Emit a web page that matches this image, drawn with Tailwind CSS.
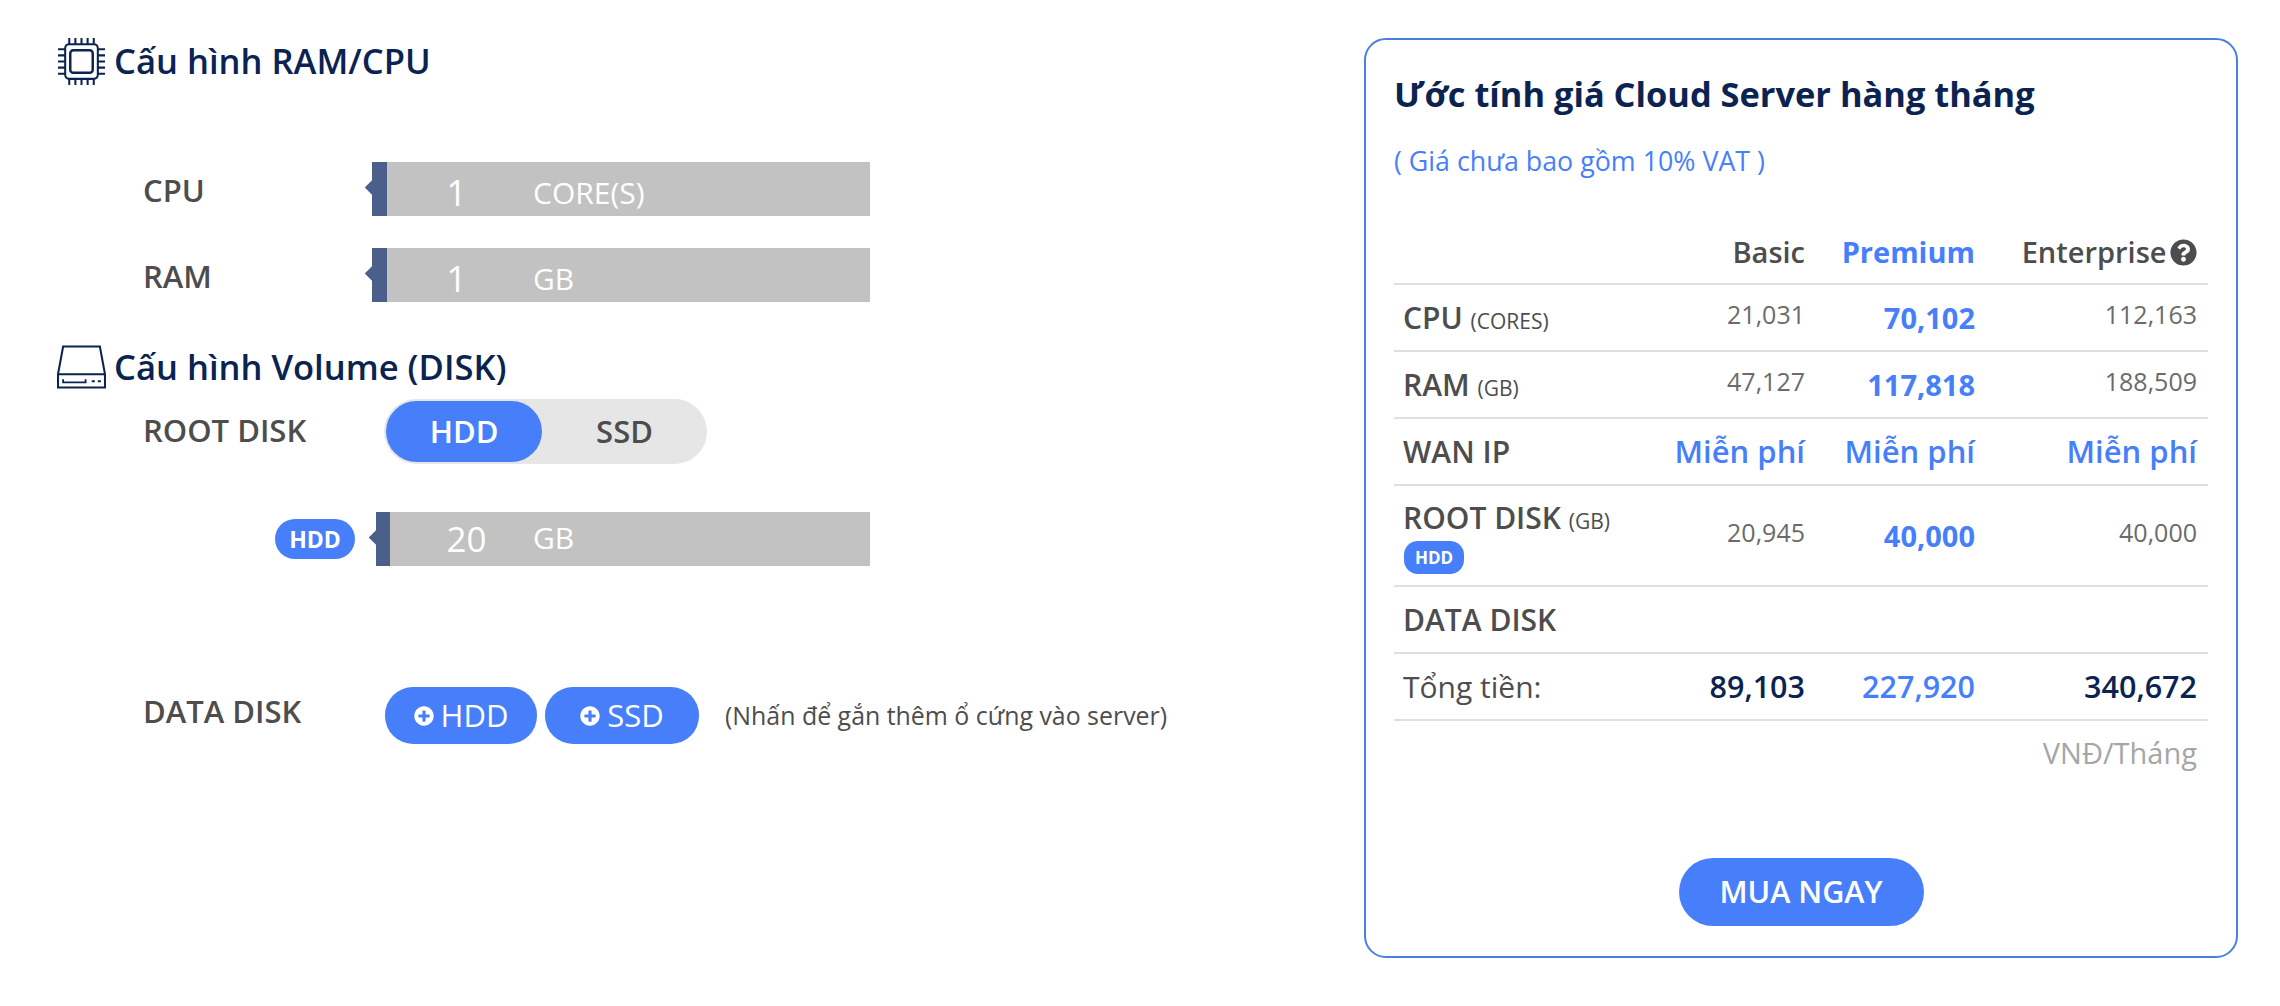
<!DOCTYPE html>
<html lang="vi">
<head>
  <meta charset="UTF-8">
  <title>Cloud Server</title>
  <script src="https://cdn.jsdelivr.net/npm/@tailwindcss/browser@4"></script>
</head>
<body class="bg-white font-['Open_Sans',sans-serif] text-[#4d4d4d]">
  <div class="flex items-start w-[2280px] h-[1006px] overflow-hidden">
    <!-- cau hinh -->
    <div class="w-[1364px] shrink-0 pl-[57px]">
      <div class="flex items-center h-[48px] mt-[37px] gap-[8px]">
        <svg class="w-[49px] h-[49px] shrink-0" viewBox="0 0 48 48" fill="none" stroke="#0a2351" stroke-width="2">
          <rect x="8" y="7" width="32" height="34" rx="4"/>
          <rect x="13" y="13" width="22" height="22" rx="3" stroke-width="2.4"/>
          <path d="M12 1v6M18 1v6M24 1v6M30 1v6M36 1v6M12 41v6M18 41v6M24 41v6M30 41v6M36 41v6M1 12h7M1 18h7M1 24h7M1 30h7M1 36h7M40 12h7M40 18h7M40 24h7M40 30h7M40 36h7"/>
        </svg>
        <h2 class="text-[34.6px] font-semibold text-[#0a2351] leading-none">Cấu hình RAM/CPU</h2>
      </div>

      <div class="flex items-center mt-[77px] h-[54px] pl-[86px]">
        <div class="w-[229px] text-[31px] font-semibold pt-[3px]">CPU</div>
        <div class="relative flex items-center w-[498px] h-[54px] bg-[#c2c2c2] text-white">
          <div class="relative self-stretch w-[15px] bg-[#4a5f8a]">
            <div class="absolute left-[-5px] top-[20px] w-[11px] h-[11px] rotate-45 bg-[#4a5f8a]"></div>
          </div>
          <span class="w-[146px] pr-[7px] text-center text-[36px] leading-none pt-[7px]">1</span>
          <span class="text-[30px] leading-none pt-[7px]">CORE(S)</span>
        </div>
      </div>

      <div class="flex items-center mt-[32px] h-[54px] pl-[86px]">
        <div class="w-[229px] text-[31px] font-semibold pt-[3px]">RAM</div>
        <div class="relative flex items-center w-[498px] h-[54px] bg-[#c2c2c2] text-white">
          <div class="relative self-stretch w-[15px] bg-[#4a5f8a]">
            <div class="absolute left-[-5px] top-[20px] w-[11px] h-[11px] rotate-45 bg-[#4a5f8a]"></div>
          </div>
          <span class="w-[146px] pr-[7px] text-center text-[36px] leading-none pt-[7px]">1</span>
          <span class="text-[30px] leading-none pt-[7px]">GB</span>
        </div>
      </div>

      <div class="flex items-center h-[48px] mt-[41px] gap-[8px]">
        <svg class="w-[49px] h-[44px] shrink-0" viewBox="0 0 48 42" fill="none" stroke="#0a2351" stroke-width="2">
          <path d="M6 1h36l5 27v13H1V28z"/>
          <path d="M1 28h46"/>
          <path d="M6 33v3h22v-3M34 35h3M40 35h3" stroke-width="1.8"/>
        </svg>
        <h2 class="text-[34.6px] font-semibold text-[#0a2351] leading-none">Cấu hình Volume (DISK)</h2>
      </div>

      <div class="flex items-start mt-[8px] pl-[86px]">
        <div class="w-[241px] text-[31px] font-semibold leading-[40px] pt-[11px]">ROOT DISK</div>
        <div class="flex items-center w-[323px] h-[65px] rounded-full bg-[#e6e6e6] p-[2px]">
          <div class="flex items-center justify-center w-[156px] h-[61px] rounded-full bg-[#477ffa] text-white text-[31px] font-semibold">HDD</div>
          <div class="flex-1 text-center text-[31px] font-semibold pl-[2px]">SSD</div>
        </div>
      </div>

      <div class="flex items-center mt-[48px] h-[54px] pl-[218px]">
        <div class="flex items-center justify-center w-[80px] h-[40px] rounded-full bg-[#477ffa] text-white text-[23px] font-bold mr-[21px]">HDD</div>
        <div class="relative flex items-center w-[494px] h-[54px] bg-[#c2c2c2] text-white">
          <div class="relative self-stretch w-[14px] bg-[#4a5f8a]">
            <div class="absolute left-[-5px] top-[20px] w-[11px] h-[11px] rotate-45 bg-[#4a5f8a]"></div>
          </div>
          <span class="w-[143px] pl-[10px] pb-[2px] text-center text-[35px] leading-none">20</span>
          <span class="text-[30px] leading-none pb-[2px]">GB</span>
        </div>
      </div>

      <div class="flex items-center mt-[121px] h-[57px] pl-[86px]">
        <div class="w-[242px] text-[31px] font-semibold pb-[8px]">DATA DISK</div>
        <div class="flex items-center justify-center gap-[7px] w-[152px] h-[57px] rounded-[28px] bg-[#477ffa] text-white text-[31px]">
          <svg class="w-[20px] h-[20px]" viewBox="0 0 512 512" fill="#fff"><path d="M256 8C119 8 8 119 8 256s111 248 248 248 248-111 248-248S393 8 256 8zm144 276c0 6.6-5.4 12-12 12h-92v92c0 6.6-5.4 12-12 12h-56c-6.6 0-12-5.4-12-12v-92h-92c-6.6 0-12-5.4-12-12v-56c0-6.6 5.4-12 12-12h92v-92c0-6.6 5.4-12 12-12h56c6.6 0 12 5.4 12 12v92h92c6.6 0 12 5.4 12 12v56z"/></svg>
          <span>HDD</span>
        </div>
        <div class="flex items-center justify-center gap-[7px] w-[154px] h-[57px] ml-[8px] rounded-[28px] bg-[#477ffa] text-white text-[31px]">
          <svg class="w-[20px] h-[20px]" viewBox="0 0 512 512" fill="#fff"><path d="M256 8C119 8 8 119 8 256s111 248 248 248 248-111 248-248S393 8 256 8zm144 276c0 6.6-5.4 12-12 12h-92v92c0 6.6-5.4 12-12 12h-56c-6.6 0-12-5.4-12-12v-92h-92c-6.6 0-12-5.4-12-12v-56c0-6.6 5.4-12 12-12h92v-92c0-6.6 5.4-12 12-12h56c6.6 0 12 5.4 12 12v92h92c6.6 0 12 5.4 12 12v56z"/></svg>
          <span>SSD</span>
        </div>
        <span class="ml-[26px] text-[24.9px] whitespace-nowrap">(Nhấn để gắn thêm ổ cứng vào server)</span>
      </div>
    </div>

    <!-- uoc tinh gia -->
    <div class="w-[874px] h-[920px] mt-[38px] shrink-0 border-2 border-[#4a7fe0] rounded-[22px] pl-[28px] pr-[28px]">
      <h3 class="mt-[30px] text-[34.4px] leading-[48px] font-bold text-[#0a2351] whitespace-nowrap">Ước tính giá Cloud Server hàng tháng</h3>
      <p class="mt-[25px] text-[26.8px] leading-[36px] text-[#477ffa]">( Giá chưa bao gồm 10% VAT )</p>

      <table class="mt-[37px] w-[814px] table-fixed">
        <colgroup><col class="w-[251px]"><col class="w-[170px]"><col class="w-[170px]"><col class="w-[223px]"></colgroup>
        <tbody>
          <tr class="h-[68px] border-b-2 border-[#e0e0e0] text-[29px] font-semibold">
            <td></td>
            <td class="px-[10px] text-right pt-[5px]">Basic</td>
            <td class="px-[10px] text-right pt-[5px] font-bold text-[#477ffa]">Premium</td>
            <td class="pl-[10px] pr-[11px] text-right pt-[5px] whitespace-nowrap">Enterprise <svg class="inline w-[27px] h-[27px] align-[-3px] ml-[-4px]" viewBox="0 0 512 512" fill="#4d4d4d"><path d="M504 256c0 136.997-111.043 248-248 248S8 392.997 8 256C8 119.083 119.043 8 256 8s248 111.083 248 248zM262.655 90c-54.497 0-89.255 22.957-116.549 63.758-3.536 5.286-2.353 12.415 2.715 16.258l34.699 26.31c5.205 3.947 12.621 3.008 16.665-2.122 17.864-22.658 30.113-35.797 57.303-35.797 20.429 0 45.698 13.148 45.698 32.958 0 14.976-12.363 22.667-32.534 33.976C247.128 238.528 216 254.941 216 296v4c0 6.627 5.373 12 12 12h56c6.627 0 12-5.373 12-12v-1.333c0-28.462 83.186-29.647 83.186-106.667 0-58.002-60.165-102-116.531-102zM256 338c-25.365 0-46 20.635-46 46 0 25.364 20.635 46 46 46s46-20.636 46-46c0-25.365-20.635-46-46-46z"/></svg></td>
          </tr>
          <tr class="h-[67px] border-b-2 border-[#e0e0e0]">
            <td class="pl-[9px] text-[30px] font-semibold whitespace-nowrap">CPU <span class="text-[21px] font-normal">(CORES)</span></td>
            <td class="px-[10px] text-right text-[25px] text-[#6b6b6b] pb-[6px]">21,031</td>
            <td class="px-[10px] text-right text-[29px] font-bold text-[#477ffa]">70,102</td>
            <td class="pl-[10px] pr-[11px] text-right text-[25px] text-[#6b6b6b] pb-[6px]">112,163</td>
          </tr>
          <tr class="h-[67px] border-b-2 border-[#e0e0e0]">
            <td class="pl-[9px] text-[30px] font-semibold whitespace-nowrap">RAM <span class="text-[21px] font-normal">(GB)</span></td>
            <td class="px-[10px] text-right text-[25px] text-[#6b6b6b] pb-[6px]">47,127</td>
            <td class="px-[10px] text-right text-[29px] font-bold text-[#477ffa]">117,818</td>
            <td class="pl-[10px] pr-[11px] text-right text-[25px] text-[#6b6b6b] pb-[6px]">188,509</td>
          </tr>
          <tr class="h-[67px] border-b-2 border-[#e0e0e0]">
            <td class="pl-[9px] text-[30px] font-semibold">WAN IP</td>
            <td class="px-[10px] text-right text-[31px] font-semibold text-[#477ffa] whitespace-nowrap">Miễn phí</td>
            <td class="px-[10px] text-right text-[31px] font-semibold text-[#477ffa] whitespace-nowrap">Miễn phí</td>
            <td class="pl-[10px] pr-[11px] text-right text-[31px] font-semibold text-[#477ffa] whitespace-nowrap">Miễn phí</td>
          </tr>
          <tr class="h-[101px] border-b-2 border-[#e0e0e0]">
            <td class="pl-[9px]">
              <div class="text-[30px] leading-[38px] font-semibold whitespace-nowrap pt-[2px]">ROOT DISK <span class="text-[21px] font-normal">(GB)</span></div>
              <div class="flex items-center justify-center w-[60px] h-[33px] mt-[1px] ml-[1px] rounded-[14px] bg-[#477ffa] text-white text-[17px] font-bold">HDD</div>
            </td>
            <td class="px-[10px] text-right text-[25px] text-[#6b6b6b] pb-[6px]">20,945</td>
            <td class="px-[10px] text-right text-[29px] font-bold text-[#477ffa]">40,000</td>
            <td class="pl-[10px] pr-[11px] text-right text-[25px] text-[#6b6b6b] pb-[6px]">40,000</td>
          </tr>
          <tr class="h-[67px] border-b-2 border-[#e0e0e0]">
            <td class="pl-[9px] text-[30px] font-semibold">DATA DISK</td>
            <td></td><td></td><td></td>
          </tr>
          <tr class="h-[67px] border-b-2 border-[#e0e0e0]">
            <td class="pl-[9px] text-[30px]">Tổng tiền:</td>
            <td class="px-[10px] text-right text-[30.5px] font-semibold text-[#0a2351]">89,103</td>
            <td class="px-[10px] text-right text-[30.5px] font-semibold text-[#477ffa]">227,920</td>
            <td class="pl-[10px] pr-[11px] text-right text-[30.5px] font-semibold text-[#0a2351]">340,672</td>
          </tr>
        </tbody>
      </table>
      <div class="mt-[12px] pr-[11px] text-right text-[29px] leading-[40px] text-[#a6a6a6]">VNĐ/Tháng</div>
      <div class="flex justify-center mt-[85px]">
        <div class="flex items-center justify-center w-[245px] h-[68px] rounded-[34px] bg-[#477ffa] text-white text-[30.5px] font-semibold">MUA NGAY</div>
      </div>
    </div>
  </div>
</body>
</html>
